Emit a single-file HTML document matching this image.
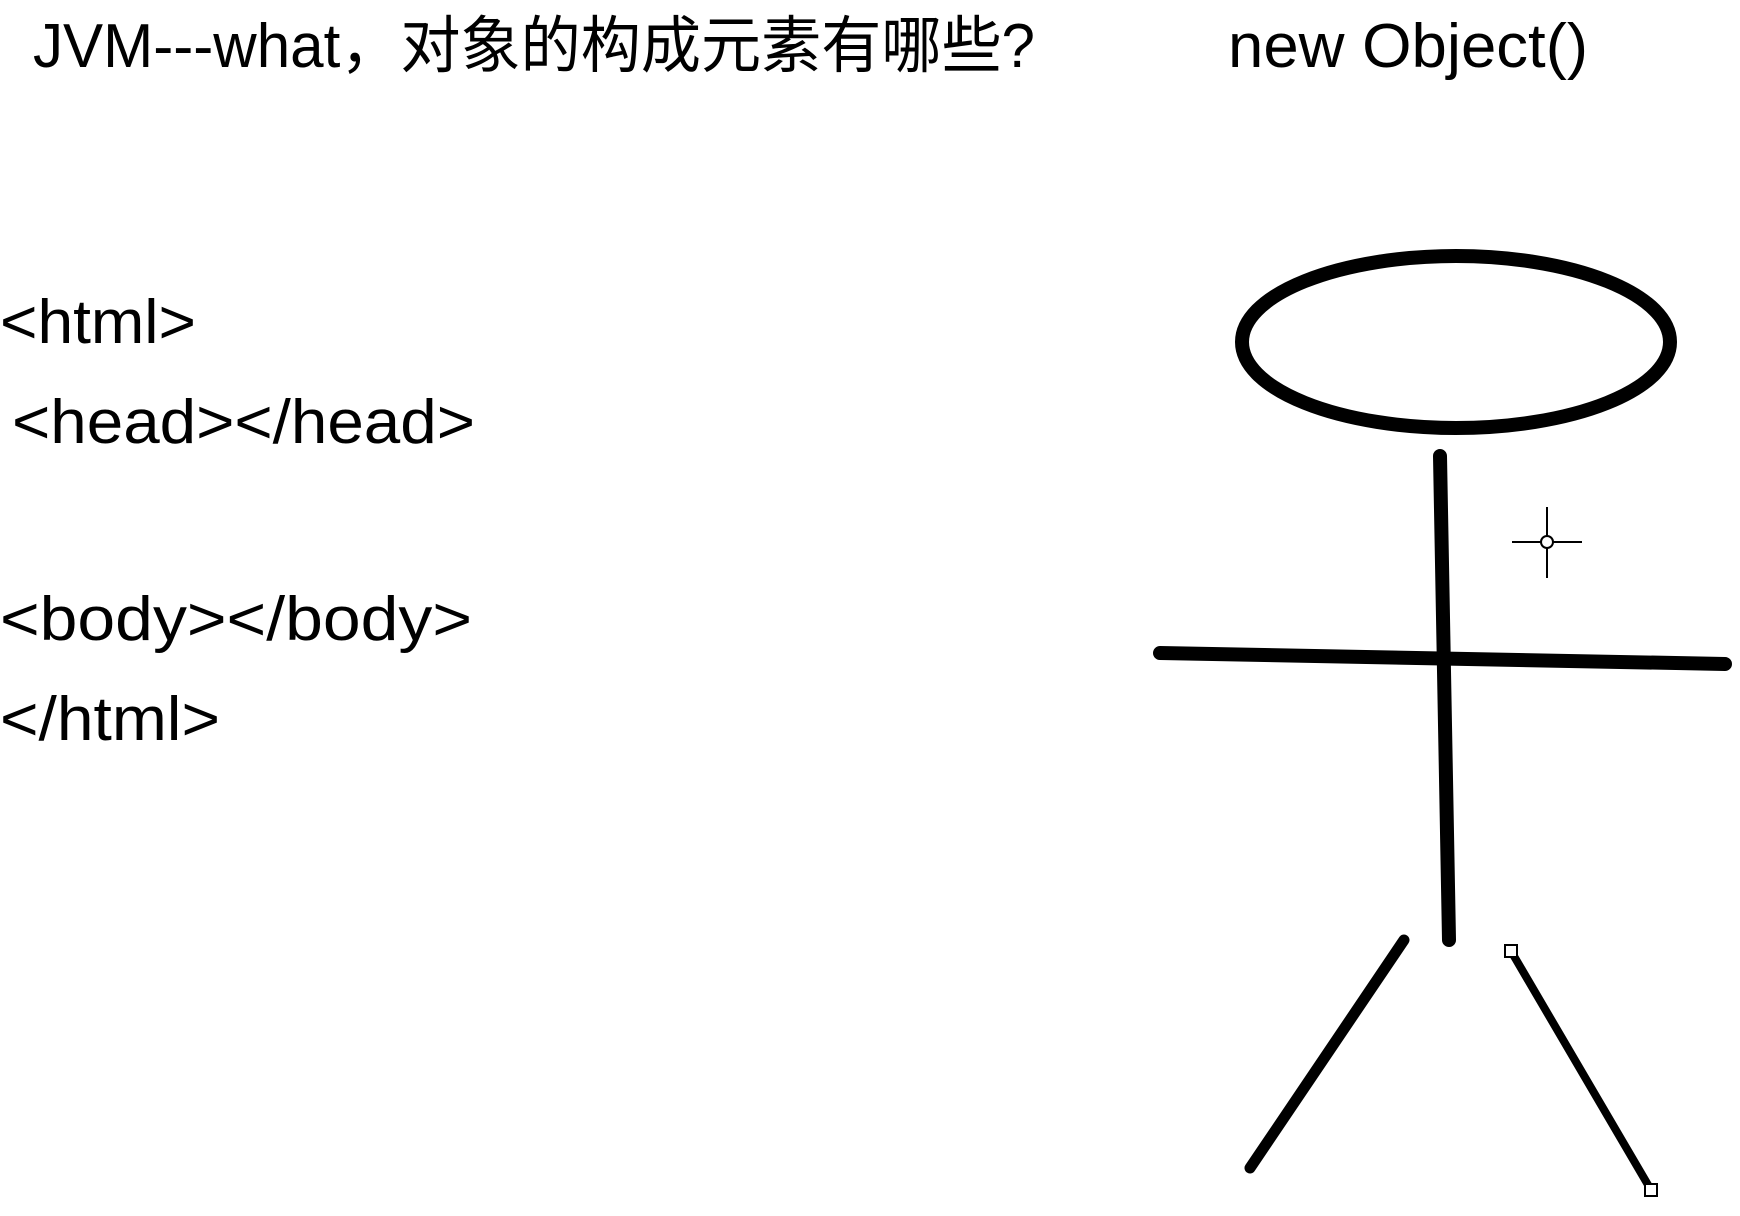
<!DOCTYPE html>
<html><head><meta charset="utf-8"><style>html,body{margin:0;padding:0;background:#fff;width:1740px;height:1216px;overflow:hidden}</style></head>
<body>
<svg width="1740" height="1216" viewBox="0 0 1740 1216" xmlns="http://www.w3.org/2000/svg">
<g font-family="Liberation Sans, Noto Sans CJK SC, sans-serif" font-size="62" fill="#000">
<text x="33" y="67" textLength="1002" lengthAdjust="spacingAndGlyphs">JVM---what，对象的构成元素有哪些?</text>
<text x="1228" y="67" textLength="360" lengthAdjust="spacingAndGlyphs">new Object()</text>
<text x="0" y="343" textLength="196" lengthAdjust="spacingAndGlyphs">&lt;html&gt;</text>
<text x="12" y="443" textLength="463" lengthAdjust="spacingAndGlyphs">&lt;head&gt;&lt;/head&gt;</text>
<text x="0" y="640" textLength="472" lengthAdjust="spacingAndGlyphs">&lt;body&gt;&lt;/body&gt;</text>
<text x="0" y="740" textLength="220" lengthAdjust="spacingAndGlyphs">&lt;/html&gt;</text>
</g>
<g stroke="#000" fill="none" stroke-linecap="round">
<ellipse cx="1456" cy="342" rx="214" ry="86" stroke-width="14"/>
<line x1="1440" y1="456" x2="1449" y2="940" stroke-width="14"/>
<line x1="1160" y1="653" x2="1725" y2="664" stroke-width="14"/>
<line x1="1404" y1="940" x2="1250" y2="1168" stroke-width="11"/>
<line x1="1511" y1="951" x2="1651" y2="1190" stroke-width="8"/>
<g stroke-width="2" stroke-linecap="butt">
<line x1="1512" y1="542" x2="1582" y2="542"/>
<line x1="1547" y1="507" x2="1547" y2="578"/>
<circle cx="1547" cy="542" r="6" fill="#fff"/>
</g>
<rect x="1505" y="945" width="12" height="12" fill="#fff" stroke-width="2"/>
<rect x="1645" y="1184" width="12" height="12" fill="#fff" stroke-width="2"/>
</g>
</svg>
</body></html>
